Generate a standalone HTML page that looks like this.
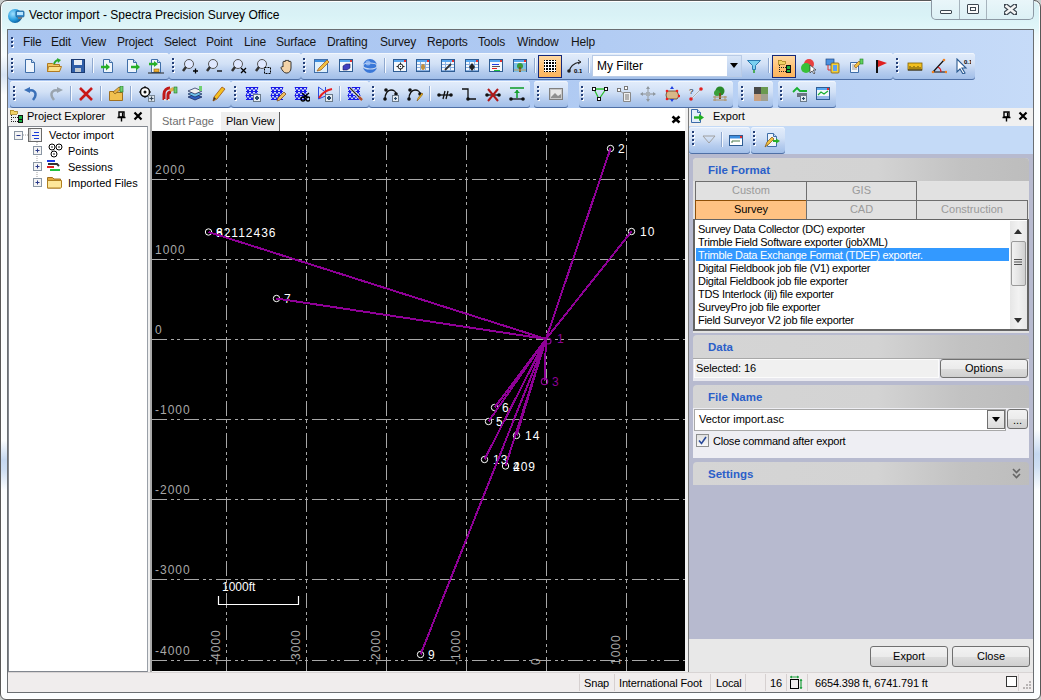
<!DOCTYPE html><html><head><meta charset="utf-8"><title>Vector import - Spectra Precision Survey Office</title><style>
*{margin:0;padding:0;box-sizing:border-box}
html,body{width:1041px;height:700px;overflow:hidden;background:#c8cccc}
body{position:relative;font-family:"Liberation Sans",sans-serif;font-size:11px;color:#000;line-height:13px}
.a{position:absolute;white-space:nowrap}
.tb{position:absolute;border-radius:3px;background:linear-gradient(180deg,#e3edfb 0%,#d2e1f6 40%,#b5ccee 70%,#9fbde8 100%);box-shadow:inset 0 -1px 0 #4f70a6, inset 0 1px 0 #f2f7fd}
.grip{position:absolute;width:3px;height:17px;background:repeating-linear-gradient(180deg,#233f73 0 2px,#ffffff 2px 3px,transparent 3px 4px)}
.sep{position:absolute;width:2px;height:18px;border-left:1px solid #8ea8cf;border-right:1px solid #f5f9fe}
.ic{position:absolute;width:16px;height:16px}
.menu{position:absolute;top:35.5px;font-size:12px;letter-spacing:-0.2px;color:#151515}
.hdrbox{position:absolute;border-radius:4px 4px 0 0;background:linear-gradient(90deg,#d5d5d5 0%,#d3d3d3 55%,#c2c2c2 80%,#bdbdbd 100%)}
.hdrtxt{position:absolute;font-weight:bold;font-size:11.5px;color:#2b5fc9}
.btn{position:absolute;border:1px solid #707070;border-radius:3px;background:linear-gradient(180deg,#f2f2f2 0%,#ebebeb 50%,#dddddd 51%,#cfcfcf 100%);text-align:center;font-size:11px;color:#000}
.li{position:absolute;left:698px;font-size:11px;letter-spacing:-0.28px;color:#000}
.tab{position:absolute;text-align:center;font-size:11px;color:#8a8a8a}
.gl{font-family:"Liberation Sans",sans-serif;font-size:12px;letter-spacing:1px;fill:#a8a8a8}
.pl{font-family:"Liberation Sans",sans-serif;font-size:12px;letter-spacing:1px;fill:#fff}
</style></head><body>
<div class="a" style="left:0;top:0;width:1041px;height:700px;border:1px solid #585858;border-radius:7px 7px 6px 6px;background:linear-gradient(180deg,#d8eff4 0px,#d9f2f6 14px,#e0f6f9 27px,#eef9fb 34px,#fafdfe 60px,#fbfdfe 100%);box-shadow:inset 0 0 0 1px #ffffff"></div>
<svg class="a" style="left:7px;top:6px" width="18" height="18" viewBox="0 0 18 18"><defs><radialGradient id="gi" cx="35%" cy="35%" r="70%"><stop offset="0" stop-color="#9fe0ff"/><stop offset="0.6" stop-color="#2a9fe0"/><stop offset="1" stop-color="#0b5e9e"/></radialGradient></defs><circle cx="8" cy="10" r="7" fill="url(#gi)"/><rect x="9" y="5" width="8" height="6" rx="1" fill="#3a8fd0" stroke="#1b5c8f" stroke-width="0.8"/><rect x="10" y="6" width="6" height="3" fill="#b9e6ff"/><rect x="11" y="11" width="4" height="2" fill="#6c7a86"/></svg>
<div class="a" style="left:29px;top:8px;font-size:12px;line-height:14px;color:#000">Vector import - Spectra Precision Survey Office</div>
<div class="a" style="left:931px;top:-1px;width:103px;height:21px;border:1px solid #8c98a4;border-top:none;border-radius:0 0 5px 5px;background:linear-gradient(180deg,#eaf6fa,#dcf0f5)"></div>
<div class="a" style="left:959px;top:0;width:1px;height:19px;background:#a6b3bd"></div>
<div class="a" style="left:986px;top:0;width:1px;height:19px;background:#a6b3bd"></div>
<div class="a" style="left:940px;top:10px;width:12px;height:4px;border:1px solid #3c4650;border-radius:1px;background:#fafafa"></div>
<div class="a" style="left:967px;top:4px;width:12px;height:10px;border:1px solid #3c4650;border-radius:1px;background:#fafafa"><div class="a" style="left:2px;top:2px;width:6px;height:4px;border:1px solid #3c4650"></div></div>
<svg class="a" style="left:1004px;top:4px" width="13" height="11" viewBox="0 0 13 11"><path d="M1.5 1.5 L11.5 9.5 M11.5 1.5 L1.5 9.5" stroke="#3c4650" stroke-width="5" stroke-linecap="square"/><path d="M1.5 1.5 L11.5 9.5 M11.5 1.5 L1.5 9.5" stroke="#f4f4f4" stroke-width="2.6" stroke-linecap="butt"/></svg>
<div class="a" style="left:1px;top:440px;width:6px;height:50px;background:linear-gradient(180deg,rgba(160,190,230,0),rgba(160,190,230,0.6) 40%,rgba(160,190,230,0.5) 60%,rgba(160,190,230,0))"></div>
<div class="a" style="left:1034px;top:430px;width:6px;height:60px;background:linear-gradient(180deg,rgba(160,190,230,0),rgba(160,190,230,0.6) 40%,rgba(160,190,230,0.5) 60%,rgba(160,190,230,0))"></div>
<div class="a" style="left:1px;top:55px;width:6px;height:40px;background:linear-gradient(180deg,rgba(170,195,230,0),rgba(170,195,230,0.45) 50%,rgba(170,195,230,0))"></div>
<div class="a" style="left:7px;top:29px;width:1027px;height:664px;border:1px solid #6a6e72;background:linear-gradient(90deg,#a8c4f0 0%,#aec9f2 50%,#bad2f5 75%,#c6dbf8 100%)"></div>
<div class="a" style="left:11px;top:37px;width:2px;height:2px;background:#243f78;box-shadow:0 4px 0 #243f78,0 8px 0 #243f78,1px 1px 0 #fff,1px 5px 0 #fff,1px 9px 0 #fff"></div>
<div class="menu" style="left:23px">File</div>
<div class="menu" style="left:51px">Edit</div>
<div class="menu" style="left:81px">View</div>
<div class="menu" style="left:117px">Project</div>
<div class="menu" style="left:164px">Select</div>
<div class="menu" style="left:206px">Point</div>
<div class="menu" style="left:244px">Line</div>
<div class="menu" style="left:276px">Surface</div>
<div class="menu" style="left:327px">Drafting</div>
<div class="menu" style="left:380px">Survey</div>
<div class="menu" style="left:427px">Reports</div>
<div class="menu" style="left:478px">Tools</div>
<div class="menu" style="left:517px">Window</div>
<div class="menu" style="left:571px">Help</div>
<div class="tb" style="left:8px;top:53px;width:161px;height:27px"></div>
<div class="tb" style="left:169px;top:53px;width:132px;height:27px"></div>
<div class="tb" style="left:301px;top:53px;width:592px;height:27px"></div>
<div class="tb" style="left:893px;top:53px;width:82px;height:27px"></div>
<div class="tb" style="left:10px;top:81px;width:221px;height:27px"></div>
<div class="tb" style="left:231px;top:81px;width:138px;height:27px"></div>
<div class="tb" style="left:369px;top:81px;width:161px;height:27px"></div>
<div class="tb" style="left:534px;top:81px;width:34px;height:27px"></div>
<div class="tb" style="left:579px;top:81px;width:154px;height:27px"></div>
<div class="tb" style="left:738px;top:81px;width:35px;height:27px"></div>
<div class="tb" style="left:778px;top:81px;width:58px;height:27px"></div>
<div class="a" style="left:11px;top:58px;width:2px;height:2px;background:#243f78;box-shadow:0 4px 0 #243f78,0 8px 0 #243f78,0 12px 0 #243f78,1px 1px 0 #fff,1px 5px 0 #fff,1px 9px 0 #fff,1px 13px 0 #fff"></div>
<div class="a" style="left:172px;top:58px;width:2px;height:2px;background:#243f78;box-shadow:0 4px 0 #243f78,0 8px 0 #243f78,0 12px 0 #243f78,1px 1px 0 #fff,1px 5px 0 #fff,1px 9px 0 #fff,1px 13px 0 #fff"></div>
<div class="a" style="left:303px;top:58px;width:2px;height:2px;background:#243f78;box-shadow:0 4px 0 #243f78,0 8px 0 #243f78,0 12px 0 #243f78,1px 1px 0 #fff,1px 5px 0 #fff,1px 9px 0 #fff,1px 13px 0 #fff"></div>
<div class="a" style="left:896px;top:58px;width:2px;height:2px;background:#243f78;box-shadow:0 4px 0 #243f78,0 8px 0 #243f78,0 12px 0 #243f78,1px 1px 0 #fff,1px 5px 0 #fff,1px 9px 0 #fff,1px 13px 0 #fff"></div>
<div class="a" style="left:13px;top:86px;width:2px;height:2px;background:#243f78;box-shadow:0 4px 0 #243f78,0 8px 0 #243f78,0 12px 0 #243f78,1px 1px 0 #fff,1px 5px 0 #fff,1px 9px 0 #fff,1px 13px 0 #fff"></div>
<div class="a" style="left:234px;top:86px;width:2px;height:2px;background:#243f78;box-shadow:0 4px 0 #243f78,0 8px 0 #243f78,0 12px 0 #243f78,1px 1px 0 #fff,1px 5px 0 #fff,1px 9px 0 #fff,1px 13px 0 #fff"></div>
<div class="a" style="left:372px;top:86px;width:2px;height:2px;background:#243f78;box-shadow:0 4px 0 #243f78,0 8px 0 #243f78,0 12px 0 #243f78,1px 1px 0 #fff,1px 5px 0 #fff,1px 9px 0 #fff,1px 13px 0 #fff"></div>
<div class="a" style="left:537px;top:86px;width:2px;height:2px;background:#243f78;box-shadow:0 4px 0 #243f78,0 8px 0 #243f78,0 12px 0 #243f78,1px 1px 0 #fff,1px 5px 0 #fff,1px 9px 0 #fff,1px 13px 0 #fff"></div>
<div class="a" style="left:581px;top:86px;width:2px;height:2px;background:#243f78;box-shadow:0 4px 0 #243f78,0 8px 0 #243f78,0 12px 0 #243f78,1px 1px 0 #fff,1px 5px 0 #fff,1px 9px 0 #fff,1px 13px 0 #fff"></div>
<div class="a" style="left:741px;top:86px;width:2px;height:2px;background:#243f78;box-shadow:0 4px 0 #243f78,0 8px 0 #243f78,0 12px 0 #243f78,1px 1px 0 #fff,1px 5px 0 #fff,1px 9px 0 #fff,1px 13px 0 #fff"></div>
<div class="a" style="left:780px;top:86px;width:2px;height:2px;background:#243f78;box-shadow:0 4px 0 #243f78,0 8px 0 #243f78,0 12px 0 #243f78,1px 1px 0 #fff,1px 5px 0 #fff,1px 9px 0 #fff,1px 13px 0 #fff"></div>
<div class="sep" style="left:92px;top:58px;height:15px"></div>
<div class="sep" style="left:384px;top:58px;height:15px"></div>
<div class="sep" style="left:534px;top:58px;height:15px"></div>
<div class="sep" style="left:588px;top:58px;height:15px"></div>
<div class="sep" style="left:768px;top:58px;height:15px"></div>
<div class="sep" style="left:70px;top:86px;height:15px"></div>
<div class="sep" style="left:100px;top:86px;height:15px"></div>
<div class="sep" style="left:130px;top:86px;height:15px"></div>
<div class="sep" style="left:339px;top:86px;height:15px"></div>
<div class="sep" style="left:429px;top:86px;height:15px"></div>
<div class="a" style="left:538px;top:55px;width:24px;height:23px;border:1px solid #16297a;background:linear-gradient(180deg,#ffd9a3,#ffbf70 60%,#fbb55e)"></div>
<div class="a" style="left:772px;top:55px;width:24px;height:23px;border:1px solid #16297a;background:linear-gradient(180deg,#ffd9a3,#ffbf70 60%,#fbb55e)"></div>
<div class="a" style="left:592px;top:55px;width:150px;height:22px;border:1px solid #b9cbe6;background:#fff"></div>
<div class="a" style="left:597px;top:59px;font-size:12px;line-height:14px;color:#000">My Filter</div>
<div class="a" style="left:727px;top:56px;width:14px;height:20px;background:linear-gradient(180deg,#d9e6f8,#b7cdee)"></div>
<svg class="a" style="left:730px;top:63px" width="9" height="6"><path d="M0 0h8L4 5z" fill="#000"/></svg>
<svg class="a" style="left:22px;top:58px" width="16" height="16" viewBox="0 0 16 16"><path d="M3.5 1.5h6l3 3v10h-9z" fill="#eef4fb" stroke="#3f6ea8"/><path d="M9.5 1.5v3h3" fill="#c8daf0" stroke="#3f6ea8"/></svg>
<svg class="a" style="left:46px;top:58px" width="16" height="16" viewBox="0 0 16 16"><path d="M1.5 5.5h5l1 1h6v7h-12z" fill="#f0c560" stroke="#b07a20"/><path d="M2.5 8.5h13l-2 5h-12z" fill="#fbe08a" stroke="#b07a20"/><path d="M8 6c1-3 3-4 5-4" stroke="#2aa82a" stroke-width="2" fill="none"/><path d="M11 0l4 2-3 3z" fill="#2aa82a"/></svg>
<svg class="a" style="left:70px;top:58px" width="16" height="16" viewBox="0 0 16 16"><rect x="1.5" y="1.5" width="13" height="13" fill="#2f5ea8" stroke="#1b3a70"/><rect x="4" y="2" width="8" height="5" fill="#e8eef6"/><rect x="5" y="10" width="6" height="4" fill="#c0c8d0"/></svg>
<svg class="a" style="left:100px;top:58px" width="16" height="16" viewBox="0 0 16 16"><path d="M3.5 1.5h6l3 3v10h-9z" fill="#eef4fb" stroke="#3f6ea8"/><path d="M9.5 1.5v3h3" fill="#c8daf0" stroke="#3f6ea8"/><path d="M1 9h6" stroke="#28b028" stroke-width="2.5"/><path d="M6 5.5l4 3.5-4 3.5z" fill="#28b028"/></svg>
<svg class="a" style="left:124px;top:58px" width="16" height="16" viewBox="0 0 16 16"><path d="M3.5 1.5h6l3 3v10h-9z" fill="#eef4fb" stroke="#3f6ea8"/><path d="M9.5 1.5v3h3" fill="#c8daf0" stroke="#3f6ea8"/><path d="M7 9h6" stroke="#28b028" stroke-width="2.5"/><path d="M12 5.5l4 3.5-4 3.5z" fill="#28b028"/></svg>
<svg class="a" style="left:148px;top:58px" width="16" height="16" viewBox="0 0 16 16"><path d="M3.5 1.5h6l3 3v10h-9z" fill="#eef4fb" stroke="#3f6ea8"/><path d="M9.5 1.5v3h3" fill="#c8daf0" stroke="#3f6ea8"/><path d="M1 6h6" stroke="#28b028" stroke-width="2.5"/><path d="M6 3l4 3-4 3z" fill="#28b028"/><rect x="6" y="11" width="5" height="3" fill="#f0b030" stroke="#8a5a10" stroke-width="0.6"/><path d="M0 15h16" stroke="#222" stroke-width="1"/></svg>
<svg class="a" style="left:182px;top:58px" width="16" height="16" viewBox="0 0 16 16"><circle cx="7" cy="6" r="4.5" fill="#dfe8ff" stroke="#555"/><path d="M4 9l-3 4" stroke="#333" stroke-width="2.5"/><path d="M11 13h5M13.5 10.5v5" stroke="#000" stroke-width="1.3"/></svg>
<svg class="a" style="left:206px;top:58px" width="16" height="16" viewBox="0 0 16 16"><circle cx="7" cy="6" r="4.5" fill="#dfe8ff" stroke="#555"/><path d="M4 9l-3 4" stroke="#333" stroke-width="2.5"/><path d="M11 13h5" stroke="#000" stroke-width="1.3"/></svg>
<svg class="a" style="left:231px;top:58px" width="16" height="16" viewBox="0 0 16 16"><circle cx="7" cy="6" r="4.5" fill="#dfe8ff" stroke="#555"/><path d="M4 9l-3 4" stroke="#333" stroke-width="2.5"/><path d="M10 10l5 5M15 10l-5 5" stroke="#000" stroke-width="1.3"/></svg>
<svg class="a" style="left:255px;top:58px" width="16" height="16" viewBox="0 0 16 16"><circle cx="7" cy="6" r="4.5" fill="#dfe8ff" stroke="#555"/><path d="M4 9l-3 4" stroke="#333" stroke-width="2.5"/><rect x="9.5" y="9.5" width="6" height="6" fill="none" stroke="#000" stroke-dasharray="2 1"/></svg>
<svg class="a" style="left:279px;top:58px" width="16" height="16" viewBox="0 0 16 16"><path d="M4 8V4c0-1 2-1 2 0V3c0-1 2-1 2 0v0c0-1 2-1 2 0v1c0-1 2-1 2 0v6c0 3-2 5-4 5H7c-2 0-4-3-5-5 0-1 1-2 2-1z" fill="#f3d3a8" stroke="#222" stroke-width="0.9"/></svg>
<svg class="a" style="left:313px;top:58px" width="16" height="16" viewBox="0 0 16 16"><rect x="1.5" y="1.5" width="13" height="13" fill="#dff0fb" stroke="#3f6ea8"/><rect x="2" y="2" width="12" height="2" fill="#3d8ee0"/><path d="M4 13l2-3 8-8 2 2-8 8z" fill="#f0c040" stroke="#a0602a" stroke-width="0.8"/></svg>
<svg class="a" style="left:338px;top:58px" width="16" height="16" viewBox="0 0 16 16"><rect x="1.5" y="1.5" width="13" height="12" fill="#f4f8fc" stroke="#2f5d94"/><rect x="2" y="2" width="12" height="2" fill="#5aa8f0"/><rect x="12" y="2" width="2" height="2" fill="#e03030"/><path d="M5 8l3-2h4v4l-3 2H5z" fill="#4040c0" stroke="#202060" stroke-width="0.6"/></svg>
<svg class="a" style="left:362px;top:58px" width="16" height="16" viewBox="0 0 16 16"><circle cx="8" cy="8" r="7" fill="#3a78d8"/><ellipse cx="8" cy="8" rx="7" ry="3" fill="none" stroke="#c8d8f0" stroke-width="1.2"/><circle cx="6" cy="5" r="2.5" fill="#a8c8f8" opacity="0.7"/></svg>
<svg class="a" style="left:392px;top:58px" width="16" height="16" viewBox="0 0 16 16"><rect x="1.5" y="1.5" width="13" height="12" fill="#f4f8fc" stroke="#2f5d94"/><rect x="2" y="2" width="12" height="2" fill="#5aa8f0"/><rect x="12" y="2" width="2" height="2" fill="#e03030"/><circle cx="8.5" cy="8.5" r="2.5" fill="none" stroke="#222"/><path d="M8.5 4.5v2M8.5 10.5v2M4.5 8.5h2M10.5 8.5h2" stroke="#222"/><rect x="8" y="8" width="1" height="1" fill="#222"/></svg>
<svg class="a" style="left:415px;top:58px" width="16" height="16" viewBox="0 0 16 16"><rect x="1.5" y="1.5" width="13" height="12" fill="#f4f8fc" stroke="#2f5d94"/><rect x="2" y="2" width="12" height="2" fill="#5aa8f0"/><rect x="12" y="2" width="2" height="2" fill="#e03030"/><path d="M2 6.5h12M2 9.5h12M2 12.5h12M5.5 4v9M10.5 4v9" stroke="#8ab0e0" stroke-width="1"/><ellipse cx="8" cy="9" rx="2" ry="3" fill="#c09040"/></svg>
<svg class="a" style="left:440px;top:58px" width="16" height="16" viewBox="0 0 16 16"><rect x="1.5" y="1.5" width="13" height="12" fill="#f4f8fc" stroke="#2f5d94"/><rect x="2" y="2" width="12" height="2" fill="#5aa8f0"/><rect x="12" y="2" width="2" height="2" fill="#e03030"/><path d="M2 6.5h12M2 9.5h12M2 12.5h12M5.5 4v9M10.5 4v9" stroke="#8ab0e0" stroke-width="1"/><path d="M5 12l6-6" stroke="#333" stroke-width="1.8"/></svg>
<svg class="a" style="left:464px;top:58px" width="16" height="16" viewBox="0 0 16 16"><rect x="1.5" y="1.5" width="13" height="12" fill="#f4f8fc" stroke="#2f5d94"/><rect x="2" y="2" width="12" height="2" fill="#5aa8f0"/><rect x="12" y="2" width="2" height="2" fill="#e03030"/><path d="M2 6.5h12M2 9.5h12M2 12.5h12M5.5 4v9M10.5 4v9" stroke="#8ab0e0" stroke-width="1"/><path d="M8 5l3 4-3 4-3-4z" fill="#222"/></svg>
<svg class="a" style="left:488px;top:58px" width="16" height="16" viewBox="0 0 16 16"><rect x="1.5" y="1.5" width="13" height="12" fill="#f4f8fc" stroke="#2f5d94"/><rect x="2" y="2" width="12" height="2" fill="#5aa8f0"/><rect x="12" y="2" width="2" height="2" fill="#e03030"/><path d="M4 6.5h7" stroke="#2040e0"/><path d="M4 8.5h8" stroke="#555"/><path d="M4 10.5h5" stroke="#e02020"/><path d="M6 12.5h6" stroke="#20c040"/></svg>
<svg class="a" style="left:512px;top:58px" width="16" height="16" viewBox="0 0 16 16"><rect x="1.5" y="1.5" width="13" height="12" fill="#f4f8fc" stroke="#2f5d94"/><rect x="2" y="2" width="12" height="2" fill="#5aa8f0"/><rect x="12" y="2" width="2" height="2" fill="#e03030"/><rect x="2" y="5" width="12" height="9" fill="#7cc0e8"/><circle cx="8" cy="8" r="3" fill="#3a9a3a"/><rect x="7" y="9" width="2" height="5" fill="#7a5020"/><path d="M2 12h12" stroke="#c0a060"/></svg>
<svg class="a" style="left:542px;top:58px" width="16" height="16" viewBox="0 0 16 16"><rect x="2" y="2" width="12" height="12" fill="#000"/><path d="M3.5 2v12M6.5 2v12M9.5 2v12M12.5 2v12M2 3.5h12M2 6.5h12M2 9.5h12M2 12.5h12" stroke="#fff" stroke-width="1"/></svg>
<svg class="a" style="left:566px;top:58px" width="16" height="16" viewBox="0 0 16 16"><path d="M3 14C4 8 8 5 14 4" stroke="#222" fill="none" stroke-width="1.2"/><circle cx="3" cy="13" r="1.8" fill="#222"/><path d="M12 2l3 2-3 2" stroke="#222" fill="none"/><text x="8" y="15" font-size="6" font-family="Liberation Sans" font-weight="bold">0.1</text></svg>
<svg class="a" style="left:746px;top:58px" width="16" height="16" viewBox="0 0 16 16"><path d="M1.5 2.5h13l-5 5v4h-3v-4z" fill="#7ad0f0" stroke="#2a7ab0"/><path d="M8 12v3" stroke="#28a028" stroke-width="1.5"/></svg>
<svg class="a" style="left:776px;top:58px" width="16" height="16" viewBox="0 0 16 16"><g transform="translate(2 1)" shape-rendering="crispEdges"><path d="M0 1h3l1 1h3v3H0z" fill="#f2d264" stroke="#a88220" stroke-width="0.8"/><g fill="#222"><rect x="1" y="6" width="1" height="1"/><rect x="1" y="8" width="1" height="1"/><rect x="1" y="10" width="1" height="1"/><rect x="1" y="12" width="1" height="1"/><rect x="3" y="8" width="1" height="1"/><rect x="5" y="8" width="1" height="1"/><rect x="7" y="8" width="1" height="1"/><rect x="3" y="12" width="1" height="1"/><rect x="5" y="12" width="1" height="1"/><rect x="7" y="12" width="1" height="1"/></g><rect x="8.5" y="6.5" width="4" height="4" fill="#18b040" stroke="#111"/><rect x="8.5" y="10.5" width="4" height="3" fill="#18b040" stroke="#111"/></g></svg>
<svg class="a" style="left:800px;top:58px" width="16" height="16" viewBox="0 0 16 16"><circle cx="9" cy="6" r="5" fill="#e84040"/><circle cx="6" cy="10" r="5" fill="#38c038"/><path d="M10 7v8l2-2 2 3 1-1-2-3h3z" fill="#fff" stroke="#333" stroke-width="0.7"/></svg>
<svg class="a" style="left:825px;top:58px" width="16" height="16" viewBox="0 0 16 16"><rect x="1" y="1" width="8" height="6" fill="#4a90e0" stroke="#204880" stroke-width="0.7"/><rect x="6" y="5" width="8" height="10" rx="1" fill="#f0d040" stroke="#806010" stroke-width="0.8"/><rect x="8" y="7" width="4" height="6" fill="#5aa0f0"/><path d="M3 7v5h3" stroke="#e03030" fill="none"/></svg>
<svg class="a" style="left:848px;top:58px" width="16" height="16" viewBox="0 0 16 16"><path d="M2.5 4.5h8v10h-8z" fill="#f4f8fc" stroke="#3f6ea8"/><path d="M4 7h5M4 9h5M4 11h5" stroke="#888" stroke-width="0.8"/><path d="M6 8l5-5 2 2-5 5z" fill="#f0c040" stroke="#a0602a" stroke-width="0.7"/><rect x="12" y="1" width="3" height="5" fill="#60d060" stroke="#208020" stroke-width="0.6"/></svg>
<svg class="a" style="left:873px;top:58px" width="16" height="16" viewBox="0 0 16 16"><path d="M4 2v13" stroke="#111" stroke-width="2"/><path d="M5 2l9 3-9 4z" fill="#e02020"/></svg>
<svg class="a" style="left:907px;top:58px" width="16" height="16" viewBox="0 0 16 16"><rect x="1" y="5" width="14" height="7" fill="#f2c020" stroke="#806000" stroke-width="0.8"/><path d="M3 11V8M5 11V9M7 11V8M9 11V9M11 11V8M13 11V9" stroke="#403000" stroke-width="0.8"/><path d="M1 12h14" stroke="#222"/></svg>
<svg class="a" style="left:931px;top:58px" width="16" height="16" viewBox="0 0 16 16"><path d="M2 14L13 2M2 14h13" stroke="#111" stroke-width="1.2"/><path d="M7 9c2 1 3 3 3 5" stroke="#e02020" fill="none" stroke-width="1.2"/><circle cx="2" cy="14" r="1.3" fill="#f08020"/><circle cx="15" cy="14" r="1.3" fill="#f08020"/><circle cx="13" cy="2" r="1.3" fill="#f08020"/></svg>
<svg class="a" style="left:955px;top:58px" width="16" height="16" viewBox="0 0 16 16"><path d="M2 1v13l3-3 3 5 2-1-3-5h4z" fill="#fff" stroke="#2a5a90" stroke-width="1.1"/><text x="9" y="6" font-size="6" font-weight="bold" font-family="Liberation Sans">0.1</text></svg>
<svg class="a" style="left:23px;top:86px" width="16" height="16" viewBox="0 0 16 16"><path d="M5 5c5-2 9 1 7 6l-2 3" stroke="#3a70b8" stroke-width="2.4" fill="none"/><path d="M1 4l6-3v6z" fill="#3a70b8"/></svg>
<svg class="a" style="left:48px;top:86px" width="16" height="16" viewBox="0 0 16 16"><path d="M11 5c-5-2-9 1-7 6l2 3" stroke="#9aa4ae" stroke-width="2.4" fill="none"/><path d="M15 4l-6-3v6z" fill="#9aa4ae"/></svg>
<svg class="a" style="left:78px;top:86px" width="16" height="16" viewBox="0 0 16 16"><path d="M2 2l12 12M14 2L2 14" stroke="#c81818" stroke-width="2.6"/></svg>
<svg class="a" style="left:108px;top:86px" width="16" height="16" viewBox="0 0 16 16"><path d="M1.5 5.5h5l1 1h7v8h-13z" fill="#f0c050" stroke="#a07020"/><path d="M5 6l6-5 2 2-6 5z" fill="#e8b040" stroke="#806020" stroke-width="0.7"/><rect x="12" y="0" width="3" height="6" fill="#70d070" stroke="#207020" stroke-width="0.6"/></svg>
<svg class="a" style="left:139px;top:86px" width="16" height="16" viewBox="0 0 16 16"><circle cx="6" cy="6" r="4.5" fill="#fff" stroke="#111" stroke-width="1.5"/><circle cx="6" cy="6" r="1.5" fill="#111"/><path d="M6 0v2M6 10v2M0 6h2M10 6h2" stroke="#111"/><rect x="9.5" y="9.5" width="6" height="6" fill="#dfe6ee" stroke="#7a8a9a"/><path d="M12.5 10.5v4M10.5 12.5h4" stroke="#345" stroke-width="1.2"/></svg>
<svg class="a" style="left:162px;top:86px" width="16" height="16" viewBox="0 0 16 16"><path d="M2 14V8c0-4 3-6 6-6M6 14V9c0-2 1-3 3-3" stroke="#c01818" stroke-width="3" fill="none"/><path d="M2 14h2M6 14h2" stroke="#ddd" stroke-width="2"/><path d="M7 3l4-2 2 3-4 2z" fill="#e0b050"/><rect x="12" y="1" width="3" height="6" fill="#70d070" stroke="#207020" stroke-width="0.6"/></svg>
<svg class="a" style="left:187px;top:86px" width="16" height="16" viewBox="0 0 16 16"><path d="M1 11l7 3 7-3-7-3z" fill="#3060c0" stroke="#102050" stroke-width="0.7"/><path d="M1 8l7 3 7-3-7-3z" fill="#70c0e8" stroke="#102050" stroke-width="0.7"/><path d="M1 5l7 3 7-3-7-3z" fill="#f0f0f0" stroke="#102050" stroke-width="0.7"/><rect x="12" y="0" width="3" height="5" fill="#70d070"/></svg>
<svg class="a" style="left:210px;top:86px" width="16" height="16" viewBox="0 0 16 16"><path d="M3 15l1-4 8-10 3 2-8 10z" fill="#f4c020" stroke="#a05010" stroke-width="0.8"/><path d="M3 15l1-4 2 1.5z" fill="#333"/></svg>
<svg class="a" style="left:245px;top:86px" width="16" height="16" viewBox="0 0 16 16"><path d="M1 1.5h12M1 5.5h12M1 9.5h12M1 13.5h12" stroke="#1a1ae8" stroke-width="1.2"/><path d="M1 1.5l2 4 2-4 2 4 2-4 2 4 2-4M1 9.5l2-4 2 4 2-4 2 4 2-4 2 4M1 9.5l2 4 2-4 2 4 2-4 2 4 2-4" stroke="#1a1ae8" stroke-width="1" fill="none"/><rect x="8.5" y="8.5" width="7" height="7" fill="#e6ecf2" stroke="#6a7a8a"/><path d="M12 10v4M10 12h4" shape-rendering="crispEdges" stroke="#2a4a6a" stroke-width="1.2"/></svg>
<svg class="a" style="left:270px;top:86px" width="16" height="16" viewBox="0 0 16 16"><path d="M1 1.5h12M1 5.5h12M1 9.5h12M1 13.5h12" stroke="#1a1ae8" stroke-width="1.2"/><path d="M1 1.5l2 4 2-4 2 4 2-4 2 4 2-4M1 9.5l2-4 2 4 2-4 2 4 2-4 2 4M1 9.5l2 4 2-4 2 4 2-4 2 4 2-4" stroke="#1a1ae8" stroke-width="1" fill="none"/><path d="M7 15l1-3 6-6 2 2-6 6z" fill="#f0c060" stroke="#805020" stroke-width="0.8"/></svg>
<svg class="a" style="left:294px;top:86px" width="16" height="16" viewBox="0 0 16 16"><path d="M1 1.5h12M1 5.5h12M1 9.5h12M1 13.5h12" stroke="#1a1ae8" stroke-width="1.2"/><path d="M1 1.5l2 4 2-4 2 4 2-4 2 4 2-4M1 9.5l2-4 2 4 2-4 2 4 2-4 2 4M1 9.5l2 4 2-4 2 4 2-4 2 4 2-4" stroke="#1a1ae8" stroke-width="1" fill="none"/><circle cx="9" cy="13" r="2" fill="none" stroke="#000" stroke-width="1.3"/><circle cx="14" cy="13" r="2" fill="none" stroke="#000" stroke-width="1.3"/><path d="M8 7l6 5M15 7l-6 5" stroke="#000" stroke-width="1.3"/></svg>
<svg class="a" style="left:317px;top:86px" width="16" height="16" viewBox="0 0 16 16"><path d="M1.5 1v12l7-3M1.5 1l7 5M8.5 1v12" stroke="#2a4ae0" stroke-width="1" fill="none"/><path d="M2 12c3-5 8-8 13-9" stroke="#e82020" stroke-width="2" fill="none"/><rect x="8.5" y="8.5" width="7" height="7" fill="#e6ecf2" stroke="#6a7a8a"/><path d="M12 10v4M10 12h4" shape-rendering="crispEdges" stroke="#2a4a6a" stroke-width="1.2"/></svg>
<svg class="a" style="left:347px;top:86px" width="16" height="16" viewBox="0 0 16 16"><path d="M1 1.5h12M1 5.5h12M1 9.5h12M1 13.5h12" stroke="#1a1ae8" stroke-width="1.2"/><path d="M1 1.5l2 4 2-4 2 4 2-4 2 4 2-4M1 9.5l2-4 2 4 2-4 2 4 2-4 2 4M1 9.5l2 4 2-4 2 4 2-4 2 4 2-4" stroke="#1a1ae8" stroke-width="1" fill="none"/><path d="M3 2l12 12" stroke="#fff" stroke-width="3"/><path d="M3 2l12 12" stroke="#222" stroke-width="1.2"/><path d="M12 11l3 3" stroke="#b05030" stroke-width="2.5"/></svg>
<svg class="a" style="left:383px;top:86px" width="16" height="16" viewBox="0 0 16 16"><path d="M2 13c0-6 3-9 6-9s5 2 5 4" stroke="#111" stroke-width="1.3" fill="none"/><circle cx="2" cy="13" r="1.8" fill="#111"/><circle cx="3" cy="4" r="1.8" fill="#111"/><circle cx="13" cy="8" r="1.8" fill="#111"/><rect x="9.5" y="9.5" width="6" height="6" fill="#e6ecf2" stroke="#6a7a8a"/><path d="M12.5 11v3M11 12.5h3" stroke="#2a4a6a" stroke-width="1.2"/></svg>
<svg class="a" style="left:407px;top:86px" width="16" height="16" viewBox="0 0 16 16"><path d="M2 13c0-6 3-9 6-9s5 2 5 4" stroke="#111" stroke-width="1.3" fill="none"/><circle cx="2" cy="13" r="1.8" fill="#111"/><circle cx="3" cy="4" r="1.8" fill="#111"/><circle cx="13" cy="8" r="1.8" fill="#111"/><path d="M10 15l1-3 4-5 1 1-4 5z" fill="#f4c020" stroke="#805010" stroke-width="0.6"/></svg>
<svg class="a" style="left:437px;top:86px" width="16" height="16" viewBox="0 0 16 16"><path d="M1 9h14" stroke="#111" stroke-width="1.3"/><circle cx="2" cy="9" r="1.8" fill="#111"/><circle cx="14" cy="9" r="1.8" fill="#111"/><path d="M6 13l2-8M9 13l2-8" stroke="#111" stroke-width="1.3"/></svg>
<svg class="a" style="left:461px;top:86px" width="16" height="16" viewBox="0 0 16 16"><path d="M1 3h6v10h8" stroke="#111" stroke-width="1.3" fill="none"/><circle cx="7" cy="13" r="1.8" fill="#111"/></svg>
<svg class="a" style="left:485px;top:86px" width="16" height="16" viewBox="0 0 16 16"><path d="M1 9h14" stroke="#111" stroke-width="1.3"/><circle cx="2" cy="9" r="1.8" fill="#111"/><circle cx="14" cy="9" r="1.8" fill="#111"/><path d="M3 3l10 12M13 3L3 15" stroke="#b01818" stroke-width="2"/></svg>
<svg class="a" style="left:509px;top:86px" width="16" height="16" viewBox="0 0 16 16"><path d="M1 2h14" stroke="#18a030" stroke-width="1.6"/><path d="M8 4v8" stroke="#18a030" stroke-width="1.6"/><path d="M5 7l3-3 3 3" fill="#18a030"/><path d="M1 13h14" stroke="#111" stroke-width="1.3"/><circle cx="2" cy="13" r="1.8" fill="#111"/><circle cx="14" cy="13" r="1.8" fill="#111"/></svg>
<svg class="a" style="left:548px;top:86px" width="16" height="16" viewBox="0 0 16 16"><rect x="1.5" y="2.5" width="13" height="11" fill="#c8c8c8" stroke="#808080"/><rect x="3" y="4" width="10" height="8" fill="#e8e8e8"/><path d="M3 11l4-4 3 3 3-2v4H3z" fill="#909090"/></svg>
<svg class="a" style="left:592px;top:86px" width="16" height="16" viewBox="0 0 16 16"><path d="M2 3h12L7 13z" fill="none" stroke="#30c030" stroke-width="1.3"/><rect x="0.5" y="1.5" width="3" height="3" fill="#fff" stroke="#111"/><rect x="12.5" y="1.5" width="3" height="3" fill="#fff" stroke="#111"/><rect x="5.5" y="11.5" width="3" height="3" fill="#fff" stroke="#111"/></svg>
<svg class="a" style="left:616px;top:86px" width="16" height="16" viewBox="0 0 16 16"><path d="M3 4l5 4" stroke="#999"/><rect x="1.5" y="2.5" width="3" height="3" fill="#fff" stroke="#777"/><rect x="8.5" y="0.5" width="3" height="3" fill="#fff" stroke="#777"/><path d="M7.5 6.5h7v9h-7z" fill="#f0f0f0" stroke="#888"/><path d="M9 9h4M9 11h4M9 13h4" stroke="#777"/></svg>
<svg class="a" style="left:640px;top:86px" width="16" height="16" viewBox="0 0 16 16"><path d="M8 1v14M1 8h14" stroke="#a0a8b0" stroke-width="1.3"/><path d="M8 0l2 3H6zM8 16l2-3H6zM0 8l3-2v4zM16 8l-3-2v4z" fill="#9098a0"/><rect x="6" y="6" width="4" height="4" fill="#a8b0b8"/></svg>
<svg class="a" style="left:664px;top:86px" width="16" height="16" viewBox="0 0 16 16"><path d="M3 5h10l2 5-2 3H3l-1-4z" fill="#d8b888" stroke="#604020" stroke-width="0.8"/><circle cx="3" cy="5" r="1.3" fill="#f02020"/><circle cx="13" cy="5" r="1.3" fill="#f02020"/><circle cx="15" cy="10" r="1.3" fill="#f02020"/><circle cx="3" cy="13" r="1.3" fill="#f02020"/><path d="M8 0l2 3H6zM8 16l2-3H6z" fill="#2040e0"/></svg>
<svg class="a" style="left:688px;top:86px" width="16" height="16" viewBox="0 0 16 16"><path d="M3 13L13 3" stroke="#e0e8f0" stroke-width="2"/><path d="M3 13L13 3" stroke="#808890" stroke-width="0.6"/><circle cx="3" cy="13" r="1.8" fill="#e02020"/><circle cx="13" cy="3" r="1.8" fill="#e02020"/><text x="1" y="8" font-size="8" font-family="Liberation Sans">?</text></svg>
<svg class="a" style="left:712px;top:86px" width="16" height="16" viewBox="0 0 16 16"><circle cx="8" cy="5" r="4.5" fill="#2a8a2a"/><circle cx="5" cy="7" r="3" fill="#3aa03a"/><rect x="7" y="7" width="2" height="6" fill="#7a4a1a"/><path d="M1 11h14M1 14h14M3 10v5M13 10v5" stroke="#b09060" stroke-width="1"/></svg>
<svg class="a" style="left:753px;top:86px" width="16" height="16" viewBox="0 0 16 16"><rect x="1" y="1" width="7" height="7" fill="#4a4a48"/><rect x="8" y="1" width="7" height="7" fill="#6a9a50"/><rect x="1" y="8" width="7" height="7" fill="#c8a080"/><rect x="8" y="8" width="7" height="7" fill="#a0a090"/></svg>
<svg class="a" style="left:792px;top:86px" width="16" height="16" viewBox="0 0 16 16"><path d="M1 6l4-4 3 3h7" stroke="#18b030" stroke-width="1.8" fill="none"/><path d="M5 8h10M5 10h10" stroke="#111" stroke-width="1.2"/><rect x="8.5" y="9.5" width="6" height="6" fill="#e6ecf2" stroke="#6a7a8a"/><path d="M11.5 11v3M10 12.5h3" stroke="#2a4a6a" stroke-width="1.2"/></svg>
<svg class="a" style="left:815px;top:86px" width="16" height="16" viewBox="0 0 16 16"><rect x="1.5" y="1.5" width="13" height="12" fill="#f4f8fc" stroke="#2f5d94"/><rect x="2" y="2" width="12" height="2" fill="#5aa8f0"/><rect x="12" y="2" width="2" height="2" fill="#e03030"/><path d="M3 9l3-3 3 2 4-3" stroke="#18b030" stroke-width="1.2" fill="none"/><path d="M3 10v3M5 10v3M7 10v3M9 10v3M11 10v3M13 10v3" stroke="#3a78d8" stroke-width="1"/></svg>
<div class="a" style="left:8px;top:108px;width:1025px;height:564px;background:#f0f0f0"></div>
<div class="a" style="left:8px;top:108px;width:140px;height:18px;background:#efefef"></div>
<svg class="a" style="left:10px;top:109px" width="13" height="14" viewBox="0 0 13 14" shape-rendering="crispEdges"><path d="M0 1h3l1 1h3v3H0z" fill="#f2d264" stroke="#a88220" stroke-width="0.8"/><g fill="#222"><rect x="1" y="6" width="1" height="1"/><rect x="1" y="8" width="1" height="1"/><rect x="1" y="10" width="1" height="1"/><rect x="1" y="12" width="1" height="1"/><rect x="3" y="8" width="1" height="1"/><rect x="5" y="8" width="1" height="1"/><rect x="7" y="8" width="1" height="1"/><rect x="3" y="12" width="1" height="1"/><rect x="5" y="12" width="1" height="1"/><rect x="7" y="12" width="1" height="1"/></g><rect x="8.5" y="6.5" width="4" height="4" fill="#18b040" stroke="#111"/><rect x="8.5" y="10.5" width="4" height="3" fill="#18b040" stroke="#111"/></svg>
<div class="a" style="left:27px;top:110px;font-size:11px;line-height:13px;color:#000">Project Explorer</div>
<svg class="a" style="left:117px;top:111px" width="9" height="11" viewBox="0 0 9 11"><path d="M2 1h5v5H2z" fill="none" stroke="#000" stroke-width="1.4"/><path d="M0.5 6.5h8M4.5 6.5v4" stroke="#000" stroke-width="1.4"/><path d="M5.5 1.5v4.5" stroke="#000" stroke-width="1.2"/></svg>
<svg class="a" style="left:133px;top:111px" width="10" height="10" viewBox="0 0 10 10"><path d="M1.5 1.5l7 7M8.5 1.5l-7 7" stroke="#000" stroke-width="2.2"/></svg>
<div class="a" style="left:8px;top:126px;width:140px;height:546px;border:1px solid #82878f;border-right-color:#9aa0a8;background:#fff"></div>
<svg class="a" style="left:8px;top:126px" width="140" height="80" viewBox="0 0 140 80"><path d="M15 9h5M29 16v41M29 25h6M29 41h6M29 57h6" stroke="#a0a0a0" stroke-dasharray="1 1" fill="none"/><rect x="6.5" y="5.5" width="8" height="8" fill="#f4f4f4" stroke="#8a96a4"/><path d="M8.5 9.5h4" stroke="#2a3a8a"/><rect x="25.5" y="20.5" width="8" height="8" fill="#f4f4f4" stroke="#8a96a4"/><path d="M27.5 24.5h4M29.5 22.5v4" stroke="#2a3a8a"/><rect x="25.5" y="36.5" width="8" height="8" fill="#f4f4f4" stroke="#8a96a4"/><path d="M27.5 40.5h4M29.5 38.5v4" stroke="#2a3a8a"/><rect x="25.5" y="52.5" width="8" height="8" fill="#f4f4f4" stroke="#8a96a4"/><path d="M27.5 56.5h4M29.5 54.5v4" stroke="#2a3a8a"/><rect x="20.5" y="2.5" width="13" height="13" fill="#f4f4f4" stroke="#6a6a6a"/><rect x="21" y="3" width="2" height="12" fill="#c8c8c8"/><path d="M26 6.5h5M24 9.5h7M26 12.5h5" stroke="#1a3ad8" stroke-width="1"/><circle cx="44" cy="21" r="3" fill="#fff" stroke="#000"/><circle cx="51" cy="21" r="3" fill="#fff" stroke="#000"/><circle cx="46" cy="28" r="3" fill="#fff" stroke="#000"/><circle cx="44" cy="21" r="0.8" fill="#000"/><circle cx="51" cy="21" r="0.8" fill="#000"/><circle cx="46" cy="28" r="0.8" fill="#000"/><path d="M39 35h8" stroke="#1a3ae8" stroke-width="2"/><path d="M40 38h9l2 2" stroke="#333" stroke-width="2" fill="none"/><path d="M39 41h7" stroke="#e02020" stroke-width="2"/><path d="M42 44h10" stroke="#20c040" stroke-width="2"/><path d="M39.5 51.5h5l1.5 1.5h6.5v9h-13z" fill="#e0a838" stroke="#a07020"/><path d="M39.5 54.5h14v6.5c0 1-1 1-1 1h-13z" fill="#fde79a" stroke="#b08020"/></svg>
<div class="a" style="left:49px;top:129px;font-size:11px;line-height:13px">Vector import</div>
<div class="a" style="left:68px;top:145px;font-size:11px;line-height:13px">Points</div>
<div class="a" style="left:68px;top:161px;font-size:11px;line-height:13px">Sessions</div>
<div class="a" style="left:68px;top:177px;font-size:11px;line-height:13px">Imported Files</div>
<div class="a" style="left:148px;top:108px;width:4px;height:564px;background:#f0f0f0"></div>
<div class="a" style="left:150px;top:108px;width:2px;height:564px;background:#a9a9a9"></div>
<div class="a" style="left:152px;top:108px;width:533px;height:23px;background:#fff"></div>
<div class="a" style="left:221px;top:112px;width:59px;height:19px;background:#efefef;border-right:1px solid #5a5a5a"></div>
<div class="a" style="left:162px;top:115px;font-size:11px;line-height:13px;color:#6d6d6d">Start Page</div>
<div class="a" style="left:226px;top:115px;font-size:11px;line-height:13px;color:#000">Plan View</div>
<svg class="a" style="left:671px;top:115px" width="10" height="9" viewBox="0 0 10 9"><path d="M1.5 1.5l7 6M8.5 1.5l-7 6" stroke="#000" stroke-width="2.6"/></svg>
<svg class="a" style="left:152px;top:131px" width="533" height="540" viewBox="152 131 533 540" shape-rendering="crispEdges"><rect x="152" y="131" width="533" height="540" fill="#000"/><path d="M226.5 131V671" stroke="#a8a8a8" stroke-width="1" stroke-dasharray="15 4 3 3 3 4" stroke-dashoffset="18"/><path d="M306.5 131V671" stroke="#a8a8a8" stroke-width="1" stroke-dasharray="15 4 3 3 3 4" stroke-dashoffset="18"/><path d="M386.5 131V671" stroke="#a8a8a8" stroke-width="1" stroke-dasharray="15 4 3 3 3 4" stroke-dashoffset="18"/><path d="M466.5 131V671" stroke="#a8a8a8" stroke-width="1" stroke-dasharray="15 4 3 3 3 4" stroke-dashoffset="18"/><path d="M546.5 131V671" stroke="#a8a8a8" stroke-width="1" stroke-dasharray="15 4 3 3 3 4" stroke-dashoffset="18"/><path d="M626.5 131V671" stroke="#a8a8a8" stroke-width="1" stroke-dasharray="15 4 3 3 3 4" stroke-dashoffset="18"/><path d="M152 179.5H685" stroke="#a8a8a8" stroke-width="1" stroke-dasharray="15 4 3 3 3 4"/><path d="M152 259.5H685" stroke="#a8a8a8" stroke-width="1" stroke-dasharray="15 4 3 3 3 4"/><path d="M152 339.5H685" stroke="#a8a8a8" stroke-width="1" stroke-dasharray="15 4 3 3 3 4"/><path d="M152 419.5H685" stroke="#a8a8a8" stroke-width="1" stroke-dasharray="15 4 3 3 3 4"/><path d="M152 499.5H685" stroke="#a8a8a8" stroke-width="1" stroke-dasharray="15 4 3 3 3 4"/><path d="M152 579.5H685" stroke="#a8a8a8" stroke-width="1" stroke-dasharray="15 4 3 3 3 4"/><path d="M152 660.5H685" stroke="#a8a8a8" stroke-width="1" stroke-dasharray="15 4 3 3 3 4"/><text class="gl" x="155" y="174">2000</text><text class="gl" x="155" y="254">1000</text><text class="gl" x="155" y="334">0</text><text class="gl" x="155" y="414">-1000</text><text class="gl" x="155" y="494">-2000</text><text class="gl" x="155" y="574">-3000</text><text class="gl" x="155" y="655">-4000</text><text class="gl" transform="translate(220 665) rotate(-90)" x="0" y="0">-4000</text><text class="gl" transform="translate(300 665) rotate(-90)" x="0" y="0">-3000</text><text class="gl" transform="translate(380 665) rotate(-90)" x="0" y="0">-2000</text><text class="gl" transform="translate(460 665) rotate(-90)" x="0" y="0">-1000</text><text class="gl" transform="translate(540 665) rotate(-90)" x="0" y="0">0</text><text class="gl" transform="translate(620 665) rotate(-90)" x="0" y="0">1000</text></svg>
<svg class="a" style="left:152px;top:131px" width="533" height="540" viewBox="152 131 533 540"><circle cx="610.5" cy="148.5" r="3.2" fill="none" stroke="#fff" stroke-width="1"/><text class="pl" x="618" y="153.0">2</text><circle cx="631.5" cy="231.5" r="3.2" fill="none" stroke="#fff" stroke-width="1"/><text class="pl" x="640" y="236.0">10</text><circle cx="208.5" cy="232" r="3.2" fill="none" stroke="#fff" stroke-width="1"/><text class="pl" x="216" y="236.5">82112436</text><text class="pl" x="216" y="236.5">6</text><circle cx="276.5" cy="298.5" r="3.2" fill="none" stroke="#fff" stroke-width="1"/><text class="pl" x="284" y="303.0">7</text><circle cx="494.5" cy="407.5" r="3.2" fill="none" stroke="#fff" stroke-width="1"/><text class="pl" x="502" y="412.0">6</text><circle cx="488.5" cy="421.5" r="3.2" fill="none" stroke="#fff" stroke-width="1"/><text class="pl" x="496" y="426.0">5</text><circle cx="516.5" cy="435.5" r="3.2" fill="none" stroke="#fff" stroke-width="1"/><text class="pl" x="525" y="440.0">14</text><circle cx="484.5" cy="459.5" r="3.2" fill="none" stroke="#fff" stroke-width="1"/><text class="pl" x="493" y="464.0">13</text><circle cx="505.5" cy="466" r="3.2" fill="none" stroke="#fff" stroke-width="1"/><text class="pl" x="513" y="470.5">4</text><text class="pl" x="513" y="470.5">209</text><circle cx="420.5" cy="654.5" r="3.2" fill="none" stroke="#fff" stroke-width="1"/><text class="pl" x="428" y="659.0">9</text><path d="M546 339L610.5 148.5" stroke="#8e0096" stroke-width="2" shape-rendering="crispEdges"/><path d="M546 339L631.5 231.5" stroke="#8e0096" stroke-width="2" shape-rendering="crispEdges"/><path d="M546 339L208.5 232" stroke="#8e0096" stroke-width="2" shape-rendering="crispEdges"/><path d="M546 339L276.5 298.5" stroke="#8e0096" stroke-width="2" shape-rendering="crispEdges"/><path d="M546 339L494.5 407.5" stroke="#8e0096" stroke-width="2" shape-rendering="crispEdges"/><path d="M546 339L488.5 421.5" stroke="#8e0096" stroke-width="2" shape-rendering="crispEdges"/><path d="M546 339L516.5 435.5" stroke="#8e0096" stroke-width="2" shape-rendering="crispEdges"/><path d="M546 339L484.5 459.5" stroke="#8e0096" stroke-width="2" shape-rendering="crispEdges"/><path d="M546 339L505.5 466" stroke="#8e0096" stroke-width="2" shape-rendering="crispEdges"/><path d="M546 339L420.5 654.5" stroke="#8e0096" stroke-width="2" shape-rendering="crispEdges"/><path d="M546 339L544.5 381" stroke="#8e0096" stroke-width="2" shape-rendering="crispEdges"/><circle cx="548" cy="341" r="3" fill="none" stroke="#8e0096" stroke-width="1.2"/><text x="557" y="343" style="font-family:Liberation Sans;font-size:12px;fill:#8e0096">1</text><circle cx="544.5" cy="381.5" r="3.2" fill="none" stroke="#8e0096" stroke-width="1.2"/><text x="552" y="386" style="font-family:Liberation Sans;font-size:12px;fill:#8e0096">3</text><path d="M218.5 596v8.5H298.5V596" stroke="#fff" stroke-width="1.2" fill="none"/><text x="222" y="591" style="font-family:Liberation Sans;font-size:12px;fill:#fff">1000ft</text></svg>
<div class="a" style="left:685px;top:108px;width:3px;height:564px;background:#f0f0f0"></div>
<div class="a" style="left:688px;top:108px;width:1px;height:564px;background:#7a7a7a"></div>
<div class="a" style="left:689px;top:108px;width:344px;height:18px;background:#f0f0f0"></div>
<svg class="a" style="left:690px;top:109px" width="15" height="15" viewBox="0 0 15 15"><path d="M1.5 0.5h6l3 3v10h-9z" fill="#e2eefa" stroke="#3a6aa8"/><path d="M7.5 0.5v3h3" fill="#c8daf0" stroke="#3a6aa8"/><path d="M4 8.5h6" stroke="#22b022" stroke-width="2.4"/><path d="M9 5l5 3.5-5 3.5z" fill="#22b022"/></svg>
<div class="a" style="left:713px;top:110px;font-size:11px;line-height:13px">Export</div>
<svg class="a" style="left:1002px;top:111px" width="9" height="11" viewBox="0 0 9 11"><path d="M2 1h5v5H2z" fill="none" stroke="#000" stroke-width="1.4"/><path d="M0.5 6.5h8M4.5 6.5v4" stroke="#000" stroke-width="1.4"/><path d="M5.5 1.5v4.5" stroke="#000" stroke-width="1.2"/></svg>
<svg class="a" style="left:1018px;top:111px" width="10" height="10" viewBox="0 0 10 10"><path d="M1.5 1.5l7 7M8.5 1.5l-7 7" stroke="#000" stroke-width="2.2"/></svg>
<div class="a" style="left:689px;top:126px;width:344px;height:28px;background:#c4daf7"></div>
<div class="tb" style="left:689px;top:127px;width:61px;height:27px"></div>
<div class="tb" style="left:751px;top:127px;width:34px;height:27px"></div>
<div class="a" style="left:692px;top:131px;width:2px;height:2px;background:#243f78;box-shadow:0 4px 0 #243f78,0 8px 0 #243f78,0 12px 0 #243f78,1px 1px 0 #fff,1px 5px 0 #fff,1px 9px 0 #fff,1px 13px 0 #fff"></div>
<div class="a" style="left:753px;top:131px;width:2px;height:2px;background:#243f78;box-shadow:0 4px 0 #243f78,0 8px 0 #243f78,0 12px 0 #243f78,1px 1px 0 #fff,1px 5px 0 #fff,1px 9px 0 #fff,1px 13px 0 #fff"></div>
<div class="sep" style="left:721px;top:132px;height:15px"></div>
<svg class="a" style="left:701px;top:132px" width="16" height="16" viewBox="0 0 16 16"><path d="M2 4h12L8 11z" fill="none" stroke="#a0a0a0"/></svg>
<svg class="a" style="left:728px;top:132px" width="16" height="16" viewBox="0 0 16 16"><rect x="1.5" y="3.5" width="13" height="10" fill="#fff" stroke="#2f5d94"/><rect x="2" y="4" width="12" height="2.5" fill="#3d8ee0"/><rect x="12" y="4" width="2" height="2" fill="#e03030"/><path d="M4 9h8" stroke="#4a7a4a"/><path d="M4 9v2" stroke="#4a7a4a"/></svg>
<svg class="a" style="left:764px;top:132px" width="16" height="16" viewBox="0 0 16 16"><path d="M3.5 1.5h6l3 3v10h-9z" fill="#eef4fb" stroke="#3f6ea8"/><path d="M9.5 1.5v3h3" fill="#c8daf0" stroke="#3f6ea8"/><path d="M1 15l2-5 5-5 2 2-5 5z" fill="#f0c040" stroke="#805010" stroke-width="0.7"/><path d="M9 9h4" stroke="#28b028" stroke-width="2"/><path d="M12 6.5l4 2.5-4 2.5z" fill="#28b028"/></svg>
<div class="a" style="left:689px;top:154px;width:344px;height:485px;background:#b7bacf"></div>
<div class="a" style="left:693px;top:158px;width:336px;height:175px;background:#e2e2e2;border-radius:4px 4px 0 0"></div>
<div class="hdrbox" style="left:693px;top:158px;width:336px;height:23px"></div>
<div class="hdrtxt" style="left:708px;top:164px;line-height:13px">File Format</div>
<div class="a" style="left:695px;top:181px;width:112px;height:20px;background:#e1e1e1;border:1px solid #6e6e6e;text-align:center;font-size:11px;line-height:17px;color:#9a9a9a">Custom</div>
<div class="a" style="left:806px;top:181px;width:111px;height:20px;background:#e1e1e1;border:1px solid #6e6e6e;text-align:center;font-size:11px;line-height:17px;color:#9a9a9a">GIS</div>
<div class="a" style="left:917px;top:182px;width:112px;height:18px;background:#e1e1e1"></div>
<div class="a" style="left:695px;top:200px;width:112px;height:20px;background:#ffc283;border:1px solid #8e4f08;text-align:center;font-size:11px;line-height:17px;color:#000">Survey</div>
<div class="a" style="left:806px;top:200px;width:111px;height:20px;background:#e1e1e1;border:1px solid #6e6e6e;text-align:center;font-size:11px;line-height:17px;color:#9a9a9a">CAD</div>
<div class="a" style="left:916px;top:200px;width:112px;height:20px;background:#e1e1e1;border:1px solid #6e6e6e;text-align:center;font-size:11px;line-height:17px;color:#9a9a9a">Construction</div>
<div class="a" style="left:693px;top:219px;width:336px;height:112px;border:2px solid #646464;border-top-width:1px;background:#fff"></div>
<div class="a" style="left:696px;top:248px;width:313px;height:13px;background:#3399ff"></div>
<div class="li" style="top:223px;color:#000">Survey Data Collector (DC) exporter</div>
<div class="li" style="top:236px;color:#000">Trimble Field Software exporter (jobXML)</div>
<div class="li" style="top:249px;color:#fff">Trimble Data Exchange Format (TDEF) exporter.</div>
<div class="li" style="top:262px;color:#000">Digital Fieldbook job file (V1) exporter</div>
<div class="li" style="top:275px;color:#000">Digital Fieldbook job file exporter</div>
<div class="li" style="top:288px;color:#000">TDS Interlock (ilj) file exporter</div>
<div class="li" style="top:301px;color:#000">SurveyPro job file exporter</div>
<div class="li" style="top:314px;color:#000">Field Surveyor V2 job file exporter</div>
<div class="a" style="left:1010px;top:221px;width:17px;height:108px;background:linear-gradient(90deg,#e6e6e6,#f2f2f2 50%,#e6e6e6)"></div>
<svg class="a" style="left:1014px;top:229px" width="9" height="5"><path d="M0 5h8L4 0z" fill="#303030"/></svg>
<svg class="a" style="left:1014px;top:318px" width="9" height="5"><path d="M0 0h8L4 5z" fill="#303030"/></svg>
<div class="a" style="left:1011px;top:241px;width:15px;height:45px;border:1px solid #9a9a9a;border-radius:2px;background:linear-gradient(90deg,#f2f2f2,#e4e4e4 50%,#cfcfcf)"></div>
<svg class="a" style="left:1014px;top:258px" width="8" height="8"><path d="M0 1.5h8M0 4h8M0 6.5h8" stroke="#505050" stroke-width="1"/></svg>
<div class="hdrbox" style="left:693px;top:335px;width:336px;height:23px"></div>
<div class="hdrtxt" style="left:708px;top:341px;line-height:13px">Data</div>
<div class="a" style="left:693px;top:358px;width:336px;height:23px;background:#e8e8ee;border-top:1px solid #a8a8a8"></div>
<div class="a" style="left:694px;top:359px;width:245px;height:19px;background:#f0f0f0;border:1px solid #fbfbfb"></div>
<div class="a" style="left:696px;top:362px;font-size:11px;line-height:13px;letter-spacing:-0.1px">Selected: 16</div>
<div class="btn" style="left:940px;top:359px;width:88px;height:19px;line-height:17px">Options</div>
<div class="hdrbox" style="left:693px;top:385px;width:336px;height:23px"></div>
<div class="hdrtxt" style="left:708px;top:391px;line-height:13px">File Name</div>
<div class="a" style="left:693px;top:408px;width:336px;height:50px;background:#eeeef3"></div>
<div class="a" style="left:694px;top:409px;width:312px;height:22px;border:1px solid #a8a8a8;background:#fff"></div>
<div class="a" style="left:699px;top:413px;font-size:11px;line-height:13px">Vector import.asc</div>
<div class="a" style="left:987px;top:410px;width:18px;height:19px;border:1px solid #707070;background:linear-gradient(180deg,#f2f2f2,#dcdcdc)"></div>
<svg class="a" style="left:992px;top:417px" width="9" height="5"><path d="M0 0h8L4 5z" fill="#000"/></svg>
<div class="btn" style="left:1007px;top:409px;width:21px;height:20px;line-height:20px;font-size:11px">...</div>
<div class="a" style="left:696px;top:434px;width:13px;height:13px;border:1px solid #8e8f8f;background:linear-gradient(180deg,#e0e0e0,#f8f8f8)"></div>
<svg class="a" style="left:698px;top:436px" width="9" height="9" viewBox="0 0 9 9"><path d="M1 4.5l2.5 3L8 1" stroke="#2a4a9a" stroke-width="1.6" fill="none"/></svg>
<div class="a" style="left:713px;top:435px;font-size:11px;line-height:13px;letter-spacing:-0.22px">Close command after export</div>
<div class="hdrbox" style="left:693px;top:462px;width:336px;height:23px"></div>
<div class="hdrtxt" style="left:708px;top:468px;line-height:13px">Settings</div>
<svg class="a" style="left:1012px;top:468px" width="9" height="11" viewBox="0 0 9 11"><path d="M1 1l3.5 3.5L8 1M1 6l3.5 3.5L8 6" stroke="#666" stroke-width="1.6" fill="none"/></svg>
<div class="a" style="left:689px;top:639px;width:344px;height:33px;background:#e8e8e8"></div>
<div class="btn" style="left:870px;top:646px;width:78px;height:21px;line-height:19px">Export</div>
<div class="btn" style="left:952px;top:646px;width:78px;height:21px;line-height:19px">Close</div>
<div class="a" style="left:8px;top:672px;width:1025px;height:20px;background:#f0eded;border-top:1px solid #d8d4d4"></div>
<div class="a" style="left:579px;top:674px;width:1px;height:17px;background:#d6d0d0"></div>
<div class="a" style="left:614px;top:674px;width:1px;height:17px;background:#d6d0d0"></div>
<div class="a" style="left:710px;top:674px;width:1px;height:17px;background:#d6d0d0"></div>
<div class="a" style="left:745px;top:674px;width:1px;height:17px;background:#d6d0d0"></div>
<div class="a" style="left:765px;top:674px;width:1px;height:17px;background:#d6d0d0"></div>
<div class="a" style="left:786px;top:674px;width:1px;height:17px;background:#d6d0d0"></div>
<div class="a" style="left:807px;top:674px;width:1px;height:17px;background:#d6d0d0"></div>
<div class="a" style="left:1018px;top:674px;width:1px;height:17px;background:#d6d0d0"></div>
<div class="a" style="left:584px;top:677px;font-size:11px;line-height:13px;letter-spacing:-0.15px">Snap</div>
<div class="a" style="left:619px;top:677px;font-size:11px;line-height:13px;letter-spacing:-0.15px">International Foot</div>
<div class="a" style="left:716px;top:677px;font-size:11px;line-height:13px;letter-spacing:-0.15px">Local</div>
<div class="a" style="left:770px;top:677px;font-size:11px;line-height:13px;letter-spacing:-0.15px">16</div>
<div class="a" style="left:815px;top:677px;font-size:11px;line-height:13px;letter-spacing:-0.15px">6654.398 ft, 6741.791 ft</div>
<svg class="a" style="left:789px;top:675px" width="14" height="15" viewBox="0 0 14 15"><rect x="1.5" y="4.5" width="8" height="9" fill="none" stroke="#000"/><path d="M1 2h9M12 4v10" stroke="#20a040" stroke-width="1.2"/><path d="M1 2l2-1.5v3zM10 2l-2-1.5v3zM12 4l-1.5 2h3zM12 14l-1.5-2h3z" fill="#20a040"/></svg>
<div class="a" style="left:1006px;top:676px;width:11px;height:11px;border:1px solid #333;background:#fff"></div>
<svg class="a" style="left:1022px;top:680px" width="10" height="10" viewBox="0 0 10 10"><g fill="#b8b4b4"><rect x="7" y="1" width="2" height="2"/><rect x="4" y="4" width="2" height="2"/><rect x="7" y="4" width="2" height="2"/><rect x="1" y="7" width="2" height="2"/><rect x="4" y="7" width="2" height="2"/><rect x="7" y="7" width="2" height="2"/></g></svg>
</body></html>
